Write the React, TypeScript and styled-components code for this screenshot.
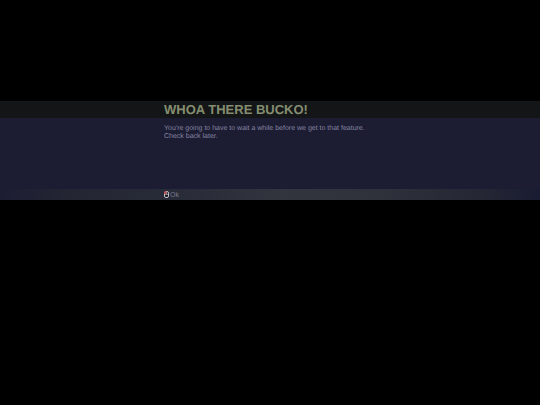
import React from "react";
import styled, { createGlobalStyle } from "styled-components";

const GlobalStyle = createGlobalStyle`
  * { box-sizing: border-box; }
  body {
    margin: 0;
    background: #000;
    font-family: "Liberation Sans", Arial, sans-serif;
    text-rendering: geometricPrecision;
  }
`;

const Screen = styled.main`
  min-height: 100vh;
  padding-top: 101px;
`;

const Dialog = styled.section`
  display: flex;
  flex-direction: column;
`;

const Column = styled.div`
  width: 212px;
  max-width: 100%;
  margin: 0 auto;
`;

const Header = styled.header`
  background: #131516;
`;

const Title = styled.h1`
  margin: 0;
  font-size: 13px;
  line-height: 17px;
  font-weight: 700;
  color: #858d70;
  white-space: nowrap;
`;

const Body = styled.div`
  min-height: 71px;
  padding: 7px 0;
  background: #1c1c33;
`;

const Message = styled.p`
  margin: 0;
  font-size: 7px;
  line-height: 8px;
  color: #8584a0;
  white-space: nowrap;
`;

const Footer = styled.footer`
  background: linear-gradient(90deg, #1c1d33 0%, #232533 12%, #282b38 32%, #32343e 52%, #2f313b 70%, #242634 90%, #191b33 100%);
`;

const ConfirmButton = styled.button`
  display: flex;
  align-items: center;
  gap: 1px;
  padding: 0;
  border: 0;
  background: none;
  color: #777989;
  font-family: inherit;
  font-size: 7px;
  line-height: 11px;
  cursor: pointer;
`;

const MouseIcon = () => (
  <svg width="5" height="7" viewBox="0 0 10 14" aria-hidden="true">
    <rect x="1" y="1" width="8" height="12" rx="3" fill="#17171d" stroke="#c4c1c8" strokeWidth="2" />
    <path d="M1 6.500H9M5 1V6.500" stroke="#c4c1c8" strokeWidth="1.500" />
    <path d="M0 6V4Q0 0 4 0H5V6Z" fill="#b65355" />
  </svg>
);

export default function App() {
  return (
    <>
      <GlobalStyle />
      <Screen>
        <Dialog role="dialog" aria-labelledby="dialog-title" aria-describedby="dialog-message">
          <Header>
            <Column>
              <Title id="dialog-title">WHOA THERE BUCKO!</Title>
            </Column>
          </Header>
          <Body>
            <Column>
              <Message id="dialog-message">
                You're going to have to wait a while before we get to that feature.
                <br />
                Check back later.
              </Message>
            </Column>
          </Body>
          <Footer>
            <Column>
              <ConfirmButton type="button">
                <MouseIcon />
                Ok
              </ConfirmButton>
            </Column>
          </Footer>
        </Dialog>
      </Screen>
    </>
  );
}
